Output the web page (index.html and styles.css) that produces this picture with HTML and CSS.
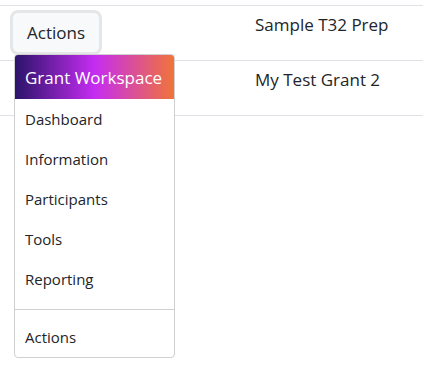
FILE: index.html
```html
<!DOCTYPE html>
<html lang="en">
<head>
    <meta charset="UTF-8">
    <title>Grants</title>
    <link rel="stylesheet" href="styles.css">
</head>
<body>
    <div class="grants">
        <div class="grant-row">
            <div class="cell-actions">
                <button class="actions-btn">Actions</button>

                <!-- Dropdown aberto -->
                <div class="menu">
                    <div class="menu-header">Grant Workspace</div>
                    <a class="menu-item" href="#">Dashboard</a>
                    <a class="menu-item" href="#">Information</a>
                    <a class="menu-item" href="#">Participants</a>
                    <a class="menu-item" href="#">Tools</a>
                    <a class="menu-item" href="#">Reporting</a>
                    <div class="menu-divider"></div>
                    <a class="menu-item" href="#">Actions</a>
                </div>
            </div>
            <div class="cell-name">Sample T32 Prep</div>
        </div>
        <div class="grant-row">
            <div class="cell-actions"></div>
            <div class="cell-name">My Test Grant 2</div>
        </div>
    </div>
</body>
</html>
```

FILE: styles.css
```css
html {
    height: 100%;
}

body {
    margin: 0;
    padding: 5px 0 0;
    min-height: 100%;
    box-sizing: border-box;
    background-color: #ffffff;
    font-family: 'Open Sans', sans-serif;
    color: #212529;
}

.grants {
    border-bottom: 1px solid #dee2e6;
}

.grant-row {
    display: grid;
    grid-template-columns: 255px 1fr;
    height: 55px;
    box-sizing: border-box;
    border-top: 1px solid #dee2e6;
}

.cell-actions {
    position: relative;
    padding: 7px 0 0 13px;
}

.actions-btn {
    width: 86px;
    height: 39px;
    padding: 0 0 0 14px;
    text-align: left;
    font-family: 'Open Sans', sans-serif;
    font-size: 17px;
    color: #212529;
    background-color: #f8f9fa;
    border: none;
    border-radius: 5px;
    box-shadow: 0 0 0 3px #e5e6e8;
    cursor: pointer;
}

.cell-name {
    padding-top: 6px;
    font-size: 17px;
    line-height: 26px;
}

/* Menu */
.menu {
    position: absolute;
    z-index: 10;
    left: 14px;
    top: 48px;
    width: 161px;
    box-sizing: border-box;
    background-color: #ffffff;
    border: 1px solid #d0d0d0;
    border-radius: 4px;
    overflow: hidden;
}

.menu-header {
    height: 44px;
    display: flex;
    align-items: center;
    padding-left: 10px;
    color: #ffffff;
    font-size: 17px;
    background: linear-gradient(90deg, #2b136a 0%, #c52cf2 50%, #f0743a 100%);
}

.menu-item {
    display: flex;
    align-items: center;
    height: 40px;
    padding-left: 10px;
    color: #212529;
    font-size: 15px;
    text-decoration: none;
}

.menu-divider {
    height: 1px;
    margin: 10px 0 7px;
    background-color: #d0d0d0;
}
```
